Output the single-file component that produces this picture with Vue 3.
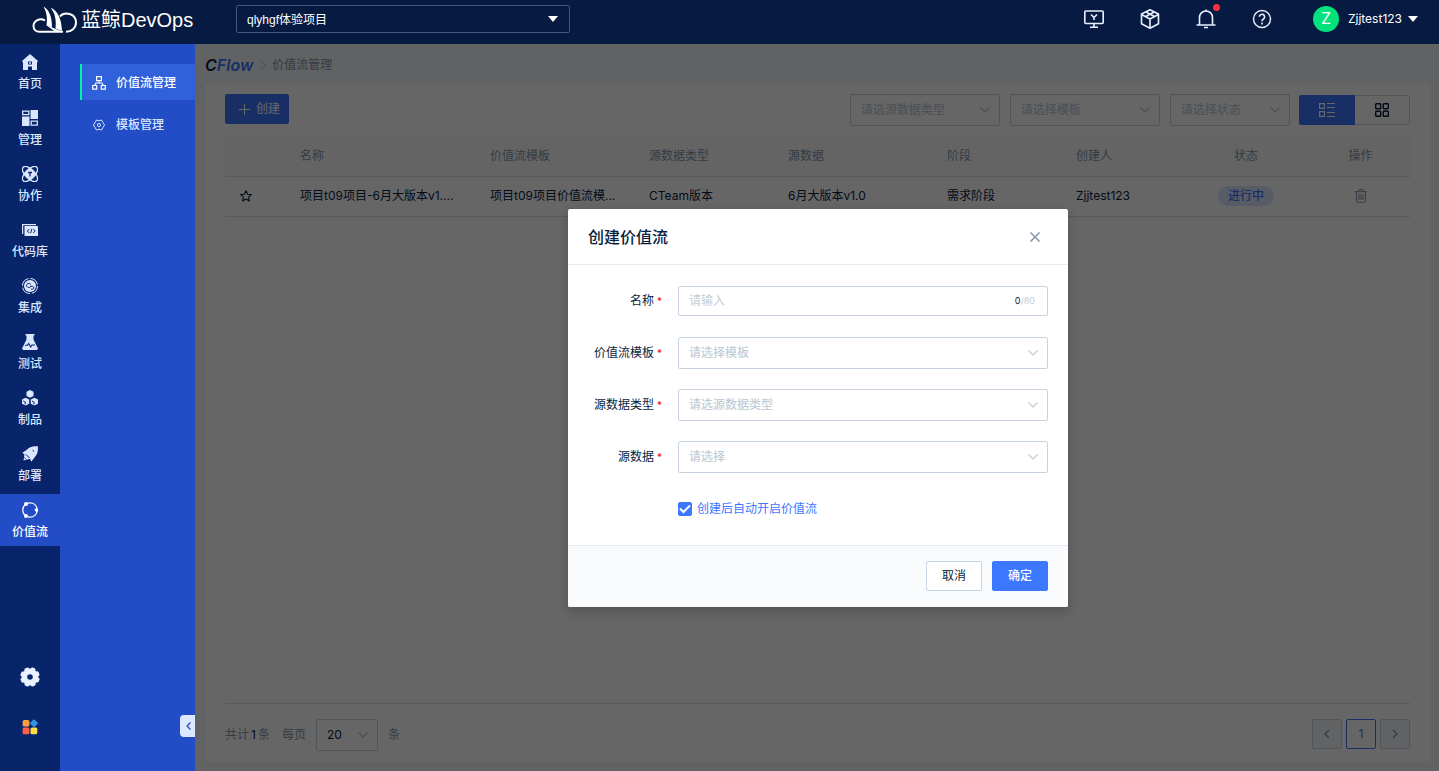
<script setup>
import { ref } from 'vue'

const railItems = [
  { key: 'home', label: '首页' },
  { key: 'manage', label: '管理' },
  { key: 'team', label: '协作' },
  { key: 'code', label: '代码库' },
  { key: 'ci', label: '集成' },
  { key: 'test', label: '测试' },
  { key: 'artifact', label: '制品' },
  { key: 'deploy', label: '部署' },
  { key: 'flow', label: '价值流' }
]
const gearTeeth = [22, 67, 112, 157, 202, 247, 292, 337]
const filters = [
  { id: 'filter-type', label: '请选源数据类型' },
  { id: 'filter-template', label: '请选择模板' },
  { id: 'filter-status', label: '请选择状态', short: true }
]
const fields = [
  { id: 'tpl', label: '价值流模板', placeholder: '请选择模板' },
  { id: 'src-type', label: '源数据类型', placeholder: '请选源数据类型' },
  { id: 'src', label: '源数据', placeholder: '请选择' }
]
const rows = [
  {
    name: '项目t09项目-6月大版本v1....',
    template: '项目t09项目价值流模...',
    type: 'CTeam版本',
    source: '6月大版本v1.0',
    stage: '需求阶段',
    creator: 'Zjjtest123',
    status: '进行中'
  }
]
const name = ref('')
const autoStart = ref(true)
</script>

<template>
  <div class="app">
    <header class="topbar">
      <a class="brand" href="#">
        <svg class="brand-mark" viewBox="0 0 46 28" width="46" height="28">
          <path d="M13 15.500C8 12.500 1.500 15.500 1.500 21C1.500 24.500 4 26.700 7.500 26.700H31" fill="none" stroke="#fff" stroke-width="2" />
          <path d="M11.500 1.500C15 8 15.500 14 14.500 20.500L20 22.500C20 12 17.500 5 11.500 1.500Z" fill="#fff" />
          <path d="M18.500 2.500C23 8 24.500 15 23.500 23.500L30 26C29.500 14 26 6 18.500 2.500Z" fill="#fff" />
          <path d="M14 20L30 26.500H23Z" fill="#fff" />
          <path d="M28 11.500C32 6.500 44 8 44 17.500C44 23 39.500 26.700 34 26.700" fill="none" stroke="#fff" stroke-width="2" />
        </svg>
        <span class="brand-text">蓝鲸DevOps</span>
      </a>
      <div class="project">
        <select class="project-select" aria-label="项目"><option>qlyhgf体验项目</option></select>
        <svg class="project-caret" width="10" height="6" viewBox="0 0 10 6"><path d="M0 0H10L5 6Z" fill="#fff" /></svg>
      </div>
      <nav class="tools">
        <button class="tool" aria-label="控制台">
          <svg width="22" height="22" viewBox="0 0 22 22" fill="none" stroke="#e8f0ff" stroke-width="1.600">
            <rect x="1.800" y="3" width="18.400" height="12.500" rx="1" /><path d="M11 15.500V19M7 19.200H15M11 12V9.500L8 6.500M11 9.500L14 6.500" />
          </svg>
        </button>
        <button class="tool" aria-label="制品">
          <svg width="22" height="22" viewBox="0 0 22 22" fill="none" stroke="#e8f0ff" stroke-width="1.600" stroke-linejoin="round">
            <path d="M11 1.800L19.500 6V15.800L11 20.200L2.500 15.800V6Z" /><path d="M2.500 6.500L11 11L19.500 6.500M11 11V20M7 4L15.500 8.500M15.200 4L6.700 8.500" />
          </svg>
        </button>
        <button class="tool" aria-label="通知">
          <svg width="22" height="22" viewBox="0 0 22 22" fill="none" stroke="#e8f0ff" stroke-width="1.600">
            <path d="M4.500 17V9.500a6.500 6.500 0 0 1 13 0V17M1.500 17H20.500M9 19.500H13M11 3V1.500" />
          </svg>
          <i class="dot"></i>
        </button>
        <button class="tool" aria-label="帮助">
          <svg width="22" height="22" viewBox="0 0 22 22" fill="none" stroke="#e8f0ff" stroke-width="1.400">
            <circle cx="11" cy="11" r="8.500" /><path d="M8.400 8.800a2.600 2.600 0 1 1 4 2.200q-1.400 .8-1.400 2.200" stroke-width="1.600" /><path d="M11 14.600v1.800" stroke-width="1.600" />
          </svg>
        </button>
      </nav>
      <button class="user">
        <span class="avatar">Z</span>
        <span>Zjjtest123</span>
        <svg width="10" height="6" viewBox="0 0 10 6"><path d="M0 0H10L5 6Z" fill="#fff" /></svg>
      </button>
    </header>

    <div class="body">
      <nav class="rail">
        <a v-for="item in railItems" :key="item.key" href="#" class="rail-item" :class="{ active: item.key === 'flow' }">
          <svg class="rail-icon" viewBox="0 0 16 16" width="16" height="16">
            <g v-if="item.key === 'home'">
              <path fill-rule="evenodd" d="M8 0L16 7L15 8.500V16H10V12.500H6V16H1V8.500L0 7ZM6 7.500V10.500H10V7.500Z" fill="#dbe7ff" />
              <path d="M7 8.300H9V9.700H7Z" fill="#dbe7ff" />
            </g>
            <g v-else-if="item.key === 'manage'">
              <path d="M8.500 0H16V9H8.500ZM0 6.500H7.500V16H0Z" fill="#dbe7ff" />
              <path d="M.7 1.200H6.800V4.600H.7ZM9.200 11.200H15.300V15.200H9.200Z" fill="none" stroke="#dbe7ff" stroke-width="1.300" />
            </g>
            <g v-else-if="item.key === 'team'">
              <g fill="none" stroke="#dbe7ff" stroke-width="1.300">
                <ellipse cx="8" cy="8" rx="9.600" ry="4.700" transform="rotate(45 8 8)" />
                <ellipse cx="8" cy="8" rx="9.600" ry="4.700" transform="rotate(-45 8 8)" />
              </g>
              <path d="M8 2L14 8L8 14L2 8Z" fill="#dbe7ff" />
              <path d="M6 6.500H10M8 6.500V10.500" stroke="#08246b" stroke-width="1.300" />
            </g>
            <g v-else-if="item.key === 'code'">
              <path d="M.6 12V2.600H14" fill="none" stroke="#dbe7ff" stroke-width="1.200" />
              <rect x="2.500" y="4" width="13.500" height="10" rx=".6" fill="#dbe7ff" />
              <path d="M7.300 7L5.300 9L7.300 11M11.200 7L13.200 9L11.200 11M9.800 6.800L8.700 11.200" fill="none" stroke="#08246b" stroke-width="1" />
            </g>
            <g v-else-if="item.key === 'ci'">
              <circle cx="8" cy="8" r="7.500" fill="none" stroke="#dbe7ff" stroke-width="1" stroke-dasharray="10 1.800" />
              <circle cx="8" cy="8" r="6" fill="#dbe7ff" />
              <path d="M8.800 6.300C6.500 4.200 3.800 6.200 4.800 8.400C5.700 10 7.700 9.800 8.600 8.700M8 8.300H10.500C12.300 8.800 12.300 11 10.500 11.200H9" fill="none" stroke="#08246b" stroke-width="1" />
            </g>
            <g v-else-if="item.key === 'test'">
              <path d="M3.500 0H12.500V1.400H11.500V5.500L16 14.500L15 16H1L0 14.500L4.500 5.500V1.400H3.500Z" fill="#dbe7ff" />
              <path d="M3 11.300H5.500L6.700 9.500L8.700 13L10 11H13" fill="none" stroke="#08246b" stroke-width="1.100" />
            </g>
            <g v-else-if="item.key === 'artifact'" fill="#dbe7ff">
              <path d="M8 0L11.500 1.800V6L8 7.800L4.500 6V1.800Z" />
              <path d="M3.600 7.800L7.200 9.600V13.700L3.600 15.600L0 13.700V9.600ZM12.400 7.800L16 9.600V13.700L12.400 15.600L8.800 13.700V9.600Z" />
              <path d="M1.200 11L3.200 12V14.300M10 11L12 12V14.300" fill="none" stroke="#08246b" />
            </g>
            <g v-else-if="item.key === 'deploy'">
              <path d="M15.800 .3C11 -.3 7 .8 4.500 4L.3 6.700L2.500 8.500L2 11L5 13.800L8 12.800L9.300 15.800L12.500 11.500C15.500 8.500 16.400 4.500 15.800 .3Z" fill="#dbe7ff" />
              <path d="M4 8.500L7.500 12M10.500 4.200L12 5.500" stroke="#08246b" /><path d="M2 11.500L4.300 13.800L1.500 14.500Z" fill="#dbe7ff" />
            </g>
            <g v-else>
              <circle cx="8" cy="8" r="7.200" fill="none" stroke="#fff" stroke-width="1.300" stroke-dasharray="13.500 1.600" />
              <circle cx="4" cy="2" r="2" fill="#fff" /><circle cx="14.500" cy="8" r="1.800" fill="#fff" /><circle cx="4" cy="14" r="2" fill="#fff" />
            </g>
          </svg>
          <span>{{ item.label }}</span>
        </a>
        <div class="rail-foot">
          <button class="rail-button" aria-label="设置">
            <svg width="20" height="20" viewBox="0 0 20 20">
              <rect v-for="a in gearTeeth" :key="a" x="7.500" y=".2" width="5" height="5" rx="1.600" fill="#eaf2ff" :transform="`rotate(${a} 10 10)`" />
              <circle cx="10" cy="10" r="5.600" fill="none" stroke="#eaf2ff" stroke-width="5.600" />
            </svg>
          </button>
          <button class="rail-button" aria-label="应用">
            <svg width="16" height="16" viewBox="0 0 16 16">
              <rect x=".6" y="1" width="6.800" height="6.600" rx="1.500" fill="#ff9c40" /><path d="M12 1.500L14.800 4.300L12 7.100L9.200 4.300Z" fill="#3494e0" stroke="#3494e0" stroke-width="2" stroke-linejoin="round" />
              <rect x=".6" y="8.600" width="6.800" height="6.600" rx="1.500" fill="#ff6044" /><rect x="8.500" y="8.600" width="6.800" height="6.600" rx="1.500" fill="#ffdc45" />
            </svg>
          </button>
        </div>
      </nav>

      <nav class="subnav">
        <a class="sub-item active" href="#">
          <svg width="14" height="14" viewBox="0 0 14 14" fill="none" stroke="currentColor" stroke-width="1.200">
            <path d="M4.600 .7H9.400V4.700H4.600ZM.7 9.500H4.700V13.200H.7ZM9.300 9.500H13.300V13.200H9.300ZM7 5V7M2.700 9.500L4 7H10L11.300 9.500" />
          </svg>
          <span>价值流管理</span>
        </a>
        <a class="sub-item" href="#">
          <svg width="14" height="14" viewBox="0 0 14 14" fill="none" stroke="currentColor">
            <path d="M4.500 2L7 2.800L9.500 2L11 4.500L12.500 7L11 9.500L9.500 12L7 11.200L4.500 12L3 9.500L1.500 7L3 4.500Z" /><circle cx="7" cy="7" r="1.600" />
          </svg>
          <span>模板管理</span>
        </a>
        <button class="fold" aria-label="收起">
          <svg width="8" height="8" viewBox="0 0 8 8" fill="none" stroke="#234cc7" stroke-width="1.300"><path d="M6.500 .5L3 4L6.500 7.500" /></svg>
        </button>
      </nav>

      <main class="main">
        <div class="crumbs">
          <a class="cflow" href="#"><span class="cflow-c">C</span>Flow</a>
          <svg width="6" height="10" viewBox="0 0 6 10" fill="none" stroke="#c4c6cc"><path d="M.5 .5L5 5L.5 9.500" /></svg>
          <span>价值流管理</span>
        </div>
        <section class="card">
          <div class="toolbar">
            <button class="create">
              <svg width="11" height="11" viewBox="0 0 11 11" stroke="#fff"><path d="M5.500 0V11M0 5.500H11" /></svg>
              <span>创建</span>
            </button>
            <div class="filters">
              <div v-for="f in filters" :key="f.id" class="select-box filter" :class="{ short: f.short }">
                <select :id="f.id" :aria-label="f.label"><option>{{ f.label }}</option></select>
                <svg class="chev" width="10" height="6" viewBox="0 0 10 6"><path d="M.5 .5L5 5L9.500 .5" /></svg>
              </div>
            </div>
            <div class="toggle">
              <button class="toggle-btn on" aria-label="列表">
                <svg width="16" height="16" viewBox="0 0 16 16" fill="none" stroke="#fff" stroke-width="1.200">
                  <path d="M.6 1.600H5.400V6.400H.6ZM.6 9.600H5.400V14.400H.6ZM8 1.500H16M8 5.500H16M8 10.500H16M8 14.500H16" />
                </svg>
              </button>
              <button class="toggle-btn" aria-label="卡片">
                <svg width="14" height="14" viewBox="0 0 14 14" fill="none" stroke="#081e40" stroke-width="1.400">
                  <rect x=".7" y=".7" width="5" height="5" rx=".6" /><rect x="8.300" y=".7" width="5" height="5" rx=".6" />
                  <rect x=".7" y="8.300" width="5" height="5" rx=".6" /><rect x="8.300" y="8.300" width="5" height="5" rx=".6" />
                </svg>
              </button>
            </div>
          </div>
          <table class="grid">
            <colgroup>
              <col class="c-star" /><col class="c-name" /><col class="c-wide" /><col class="c-type" /><col class="c-wide" />
              <col class="c-stage" /><col class="c-creator" /><col class="c-status" /><col class="c-act" />
            </colgroup>
            <thead>
              <tr>
                <th></th><th>名称</th><th>价值流模板</th><th>源数据类型</th><th>源数据</th><th>阶段</th><th>创建人</th>
                <th class="mid">状态</th><th class="mid">操作</th>
              </tr>
            </thead>
            <tbody>
              <tr v-for="r in rows" :key="r.name">
                <td>
                  <button class="icon-btn" aria-label="收藏">
                    <svg width="12" height="12" viewBox="0 0 12 12" fill="none" stroke="#081e40" stroke-width="1.100" stroke-linejoin="round">
                      <path d="M6 .8L7.600 4.200L11.400 4.600L8.600 7.100L9.400 10.900L6 9L2.600 10.900L3.400 7.100L.6 4.600L4.400 4.200Z" />
                    </svg>
                  </button>
                </td>
                <td>{{ r.name }}</td><td>{{ r.template }}</td><td>{{ r.type }}</td><td>{{ r.source }}</td>
                <td>{{ r.stage }}</td><td>{{ r.creator }}</td>
                <td class="mid"><span class="tag">{{ r.status }}</span></td>
                <td class="mid">
                  <button class="icon-btn" aria-label="删除">
                    <svg width="12" height="14" viewBox="0 0 12 14" fill="none" stroke="#8496ab" stroke-width="1">
                      <path d="M0 2.700H12M4 2.500V.7H8V2.500M1.500 3V12.300a1 1 0 0 0 1 1H9.500a1 1 0 0 0 1-1V3M4 5V11M6 5V11M8 5V11" />
                    </svg>
                  </button>
                </td>
              </tr>
            </tbody>
          </table>
          <footer class="pager">
            <span class="total">共计<b>1</b>条</span>
            <label class="per" for="per">每页</label>
            <div class="select-box per-box">
              <select id="per"><option>20</option></select>
              <svg class="chev" width="10" height="6" viewBox="0 0 10 6"><path d="M.5 .5L5 5L9.500 .5" /></svg>
            </div>
            <span>条</span>
            <div class="pages">
              <button class="page off" aria-label="上一页"><svg width="6" height="10" viewBox="0 0 6 10" fill="none" stroke="#8496ab" stroke-width="1.400"><path d="M5 1L1 5L5 9" /></svg></button>
              <button class="page on">1</button>
              <button class="page off" aria-label="下一页"><svg width="6" height="10" viewBox="0 0 6 10" fill="none" stroke="#8496ab" stroke-width="1.400"><path d="M1 1L5 5L1 9" /></svg></button>
            </div>
          </footer>
        </section>

        <div class="mask">
          <form class="modal" role="dialog" aria-labelledby="modal-title" @submit.prevent>
            <div class="modal-head">
              <h2 id="modal-title">创建价值流</h2>
              <button type="button" class="icon-btn" aria-label="关闭">
                <svg width="10" height="10" viewBox="0 0 10 10" stroke="#8496ab" stroke-width="1.500"><path d="M.5 .5L9.500 9.500M9.500 .5L.5 9.500" /></svg>
              </button>
            </div>
            <div class="modal-body">
              <div class="field">
                <label for="name">名称<i>*</i></label>
                <div class="text-box">
                  <input id="name" v-model="name" type="text" maxlength="80" placeholder="请输入" />
                  <span class="count"><b>{{ name.length }}</b>/80</span>
                </div>
              </div>
              <div v-for="f in fields" :key="f.id" class="field">
                <label :for="f.id">{{ f.label }}<i>*</i></label>
                <div class="select-box">
                  <select :id="f.id"><option>{{ f.placeholder }}</option></select>
                  <svg class="chev" width="10" height="6" viewBox="0 0 10 6"><path d="M.5 .5L5 5L9.500 .5" /></svg>
                </div>
              </div>
              <div class="auto">
                <input id="auto" v-model="autoStart" type="checkbox" />
                <svg v-if="autoStart" class="tick" width="14" height="14" viewBox="0 0 14 14" fill="none" stroke="#fff" stroke-width="2"><path d="M2 6.500L5.500 10L12 3.500" /></svg>
                <label for="auto">创建后自动开启价值流</label>
              </div>
            </div>
            <div class="modal-foot">
              <button type="button" class="btn">取消</button>
              <button type="submit" class="btn primary">确定</button>
            </div>
          </form>
        </div>
      </main>
    </div>
  </div>
</template>

<style>
html, body { margin: 0; }
</style>

<style scoped>
* { box-sizing: border-box; }
.app {
  min-height: 100vh; display: flex; flex-direction: column;
  font-family: Inter, "Noto Sans CJK SC", sans-serif; font-size: 12px; line-height: 20px; color: #081e40;
}
button, input, select { font: inherit; color: inherit; margin: 0; }
button { padding: 0; border: 0; background: none; display: flex; align-items: center; justify-content: center; }
a { color: inherit; text-decoration: none; }
svg { flex: none; display: block; }
select { appearance: none; width: 100%; height: 100%; border: 0; background: none; outline: 0; }

.topbar { height: 44px; background: #071a42; color: #fff; display: flex; align-items: center; padding: 0 21px 6px 32px; }
.brand { display: flex; align-items: center; gap: 3px; width: 204px; }
.brand-text { font: 20px/28px "Liberation Sans", "Noto Sans CJK SC", sans-serif; white-space: nowrap; padding-top: 2px; }
.project { position: relative; width: 334px; height: 28px; border: 1px solid #46557a; border-radius: 2px; }
.project-select { padding: 2px 30px 0 10px; font-family: "Liberation Sans", "Noto Sans CJK SC", sans-serif; }
.project-select option { color: #081e40; }
.project-caret { position: absolute; right: 11px; top: 10px; pointer-events: none; }
.tools { margin-left: auto; display: flex; gap: 34px; }
.tool { position: relative; width: 22px; height: 22px; }
.dot { position: absolute; top: -4px; right: -3px; width: 7px; height: 7px; border-radius: 50%; background: #ff2e43; }
.user { margin-left: 40px; gap: 6px; }
.avatar { width: 26px; height: 26px; margin-right: 3px; border-radius: 50%; background: #00e37c; font-size: 16px; line-height: 24px; text-align: center; }

.body { flex: 1; display: flex; }
.rail { width: 60px; flex: none; background: #08246b; color: #dbe7ff; display: flex; flex-direction: column; gap: 4px; padding-top: 2px; font-weight: 500; }
.rail-item { height: 52px; display: flex; flex-direction: column; align-items: center; gap: 4px; padding-top: 8px; }
.rail-item.active { background: #234cc7; color: #fff; }
.rail-foot { margin-top: auto; display: flex; flex-direction: column; align-items: center; gap: 26px; padding-bottom: 32px; }
.rail-button { width: 24px; height: 24px; }

.subnav { position: relative; width: 135px; flex: none; background: #234cc7; padding: 20px 0 0 20px; color: #d6e3ff; display: flex; flex-direction: column; gap: 6px; }
.sub-item { height: 36px; display: flex; align-items: center; gap: 10px; padding: 1px 0 0 10px; border-left: 2px solid transparent; font-weight: 500; }
.sub-item.active { background: #3061da; border-color: #00f5a0; color: #fff; }
.fold { position: absolute; right: 0; bottom: 34px; width: 15px; height: 22px; background: #dce8ff; border-radius: 4px 0 0 4px; }

.main { position: relative; flex: 1; min-width: 0; background: #f2f4f9; padding: 0 9px 9px 10px; display: flex; flex-direction: column; }
.crumbs { height: 40px; display: flex; align-items: center; gap: 6px; padding-top: 1px; color: #8496ab; }
.cflow { color: #3c77ff; font-size: 16px; font-weight: 600; font-style: italic; margin-right: 1px; }
.cflow-c { color: #081e40; }
.card { flex: 1; background: #fff; padding: 10px 20px 11px; display: flex; flex-direction: column; }
.toolbar { height: 32px; display: flex; gap: 9px; }
.create { width: 64px; height: 30px; padding-left: 5px; margin-right: auto; border-radius: 2px; background: #3c77ff; color: #fff; gap: 6px; }
.filters { display: flex; gap: 10px; }

.select-box { position: relative; height: 32px; flex: 1; border: 1px solid #c7d3e3; border-radius: 2px; color: #c3cdd7; }
.select-box select { padding: 0 24px 0 10px; font-weight: 500; }
.chev { position: absolute; right: 9px; top: 12px; fill: none; stroke: #c3cdd7; stroke-width: 1.3; pointer-events: none; }
.filter { flex: none; width: 150px; }
.filter.short { width: 120px; }
.toggle { display: flex; height: 30px; margin-top: 1px; border: 1px solid #c7d3e3; border-radius: 2px; }
.toggle-btn { width: 54px; }
.toggle-btn.on { width: 56px; margin: -1px 0 -1px -1px; background: #3c77ff; border-radius: 2px 0 0 2px; }

.grid { width: 100%; margin-top: 10px; table-layout: fixed; border-collapse: collapse; }
.grid th, .grid td { height: 40px; padding: 0 0 0 15px; text-align: left; font-weight: 400; border-bottom: 1px solid #dcdee5; white-space: nowrap; overflow: hidden; }
.grid th { background: #fafbfd; color: #8496ab; }
.grid .mid { padding: 0; text-align: center; }
.grid .mid .icon-btn { margin: 0 auto; }
.c-star { width: 60px; }
.c-name { width: 190px; }
.c-wide { width: 159px; }
.c-type { width: 139px; }
.c-stage { width: 129px; }
.c-creator { width: 120px; }
.c-status { width: 130px; }
.icon-btn { min-width: 12px; min-height: 14px; }
.tag { display: inline-block; padding: 0 10px; border-radius: 10px; background: #dce6ff; color: #3c77ff; font-weight: 500; }

.pager { margin-top: auto; border-top: 1px solid #dcdee5; padding-top: 15px; display: flex; align-items: center; gap: 10px; color: #8496ab; }
.total { margin-right: 2px; }
.total b { font-weight: 400; color: #081e40; margin: 0 2px; }
.per-box { flex: none; width: 62px; }
.select-box.per-box select { font-weight: 400; color: #081e40; }
.pages { margin-left: auto; display: flex; gap: 4px; align-self: flex-start; }
.page { width: 30px; height: 30px; border: 1px solid #c7d3e3; border-radius: 2px; }
.page.off { background: #f5f7fa; }
.page.on { border-color: #3c77ff; color: #3c77ff; }

.mask { position: absolute; inset: 0; background: rgba(0, 0, 0, 0.6); display: flex; align-items: center; justify-content: center; padding: 1px 0 0 2px; }
.modal { width: 500px; background: #fff; border-radius: 2px; box-shadow: 0 4px 12px rgba(0, 0, 0, 0.2); }
.modal-head { height: 56px; border-bottom: 1px solid #e6eaf0; padding: 0 27px 0 20px; display: flex; align-items: center; justify-content: space-between; }
.modal-head h2 { margin: 0; font-size: 16px; line-height: 24px; font-weight: 500; }
.modal-body { padding: 20px; display: flex; flex-direction: column; gap: 20px; }
.field { display: flex; align-items: center; height: 32px; }
.field label { width: 90px; padding-right: 16px; text-align: right; flex: none; }
.field i { color: #f00; font-style: normal; font-size: 10px; margin-left: 3px; }
.text-box { flex: 1; height: 30px; display: flex; align-items: center; border: 1px solid #c7d3e3; border-radius: 2px; padding: 0 12px 0 10px; }
.text-box input { flex: 1; min-width: 0; border: 0; outline: 0; padding: 0; background: none; }
.text-box input::placeholder { color: #c3cdd7; }
.count { font-size: 9px; color: #c3cdd7; }
.count b { font-weight: 400; color: #081e40; }
.auto { position: relative; height: 32px; margin-left: 90px; display: flex; align-items: center; gap: 5px; color: #3c77ff; }
.auto input { appearance: none; width: 14px; height: 14px; border: 1px solid #3c77ff; border-radius: 2px; }
.auto input:checked { background: #3c77ff; }
.tick { position: absolute; left: 0; top: 9px; pointer-events: none; }
.modal-foot { border-top: 1px solid #e6eaf0; background: #fafbfd; padding: 15px 20px 16px; display: flex; justify-content: flex-end; gap: 10px; border-radius: 0 0 2px 2px; }
.btn { width: 56px; height: 30px; border: 1px solid #c7d3e3; border-radius: 2px; background: #fff; }
.btn.primary { background: #3c77ff; border-color: #3c77ff; color: #fff; font-weight: 500; }
</style>
